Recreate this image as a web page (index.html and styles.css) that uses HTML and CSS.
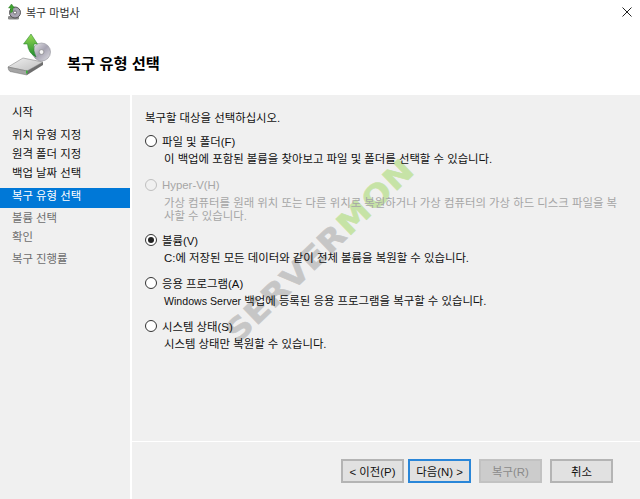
FILE: index.html
```html
<!DOCTYPE html>
<html lang="ko">
<head>
  <meta charset="UTF-8" />
  <title>복구 마법사</title>
  <link rel="stylesheet" href="styles.css">
</head>
<body>
  <div class="wizard">
    <div class="titlebar">
      <svg class="title-icon" width="18" height="18" viewBox="0 0 18 18">
        <rect x="1" y="13" width="11" height="3.5" rx="1.2" fill="#8a8a8a" />
        <circle cx="8" cy="9.5" r="5.5" fill="#a8a4b2" stroke="#4a4a4a" stroke-width=".9" />
        <circle cx="8" cy="9.5" r="1.5" fill="#fff" stroke="#333" stroke-width=".6" />
        <path d="M3.5 10 V5 H1.5 L4.5 1 7.5 5 H5.8 V8.5 Z" fill="#3fa32f" stroke="#1f6d1b" stroke-width=".4" />
      </svg>
      <span class="title-text">복구 마법사</span>
      <svg class="close-icon" width="10" height="10" viewBox="0 0 10 10">
        <path d="M.5 .5 L9.5 9.5 M9.5 .5 L.5 9.5" stroke="#222" stroke-width="1" fill="none" />
      </svg>
    </div>

    <div class="header">
      <svg class="header-icon" width="44" height="44" viewBox="7 33 44 44">
        <defs>
          <linearGradient id="disc" x1="0" y1="0" x2="1" y2="1">
            <stop offset="0" stop-color="#ecebee" />
            <stop offset=".5" stop-color="#a6a3b2" />
            <stop offset="1" stop-color="#e2e2e6" />
          </linearGradient>
          <linearGradient id="top" x1="0" y1="0" x2="1" y2="1">
            <stop offset="0" stop-color="#f0f0f0" />
            <stop offset="1" stop-color="#bdbdbd" />
          </linearGradient>
          <linearGradient id="arrow" x1="0" y1="0" x2="0" y2="1">
            <stop offset="0" stop-color="#98dc55" />
            <stop offset="1" stop-color="#1d8a2e" />
          </linearGradient>
        </defs>
        <!-- drive -->
        <path d="M8 67 L23 58 L43 62 L27 71 Z" fill="url(#top)" stroke="#8a8a8a" stroke-width=".6" />
        <path d="M8 67 L27 71 V75 L10 71.5 Q8 70 8 67 Z" fill="#a4a4a4" stroke="#6f6f6f" stroke-width=".5" />
        <path d="M27 71 L43 62 V65 L27 75 Z" fill="#6e6e6e" />
        <rect x="26" y="70.5" width="1.6" height="3" fill="#3bb53a" />
        <!-- disc -->
        <circle cx="41.5" cy="52" r="9" fill="url(#disc)" stroke="#8f8f97" stroke-width=".6" />
        <circle cx="41.5" cy="52" r="2.4" fill="#f6f6f6" stroke="#777" stroke-width=".6" />
        <!-- arrow -->
        <path d="M31 34 L37.5 44 H34 Q33 51 36 57 Q28 53 27.5 44 H23.5 Z" fill="url(#arrow)" stroke="#1c7a26" stroke-width=".5" />
      </svg>
      <h1 class="header-title">복구 유형 선택</h1>
    </div>

    <div class="body">
      <ul class="steps">
        <li class="step step-start">시작</li>
        <li class="step">위치 유형 지정</li>
        <li class="step">원격 폴더 지정</li>
        <li class="step">백업 날짜 선택</li>
        <li class="step step-current">복구 유형 선택</li>
        <li class="step step-todo">볼륨 선택</li>
        <li class="step step-todo">확인</li>
        <li class="step step-todo step-last">복구 진행률</li>
      </ul>

      <div class="main">
        <div class="content">
          <p class="prompt">복구할 대상을 선택하십시오.</p>

          <div class="option">
            <div class="radio-row"><span class="radio"></span>파일 및 폴더(F)</div>
            <p class="desc">이 백업에 포함된 볼륨을 찾아보고 파일 및 폴더를 선택할 수 있습니다.</p>
          </div>
          <div class="option option-disabled">
            <div class="radio-row"><span class="radio"></span>Hyper-V(H)</div>
            <p class="desc">가상 컴퓨터를 원래 위치 또는 다른 위치로 복원하거나 가상 컴퓨터의 가상 하드 디스크 파일을 복사할 수 있습니다.</p>
          </div>
          <div class="option">
            <div class="radio-row"><span class="radio radio-on"></span>볼륨(V)</div>
            <p class="desc">C:에 저장된 모든 데이터와 같이 전체 볼륨을 복원할 수 있습니다.</p>
          </div>
          <div class="option">
            <div class="radio-row"><span class="radio"></span>응용 프로그램(A)</div>
            <p class="desc"><span class="latin">Windows Server</span> 백업에 등록된 응용 프로그램을 복구할 수 있습니다.</p>
          </div>
          <div class="option">
            <div class="radio-row"><span class="radio"></span>시스템 상태(S)</div>
            <p class="desc">시스템 상태만 복원할 수 있습니다.</p>
          </div>
        </div>

        <div class="footer">
          <button class="btn btn-back">&lt; 이전(P)</button>
          <button class="btn btn-default">다음(N) &gt;</button>
          <button class="btn btn-disabled">복구(R)</button>
          <button class="btn">취소</button>
        </div>
      </div>
    </div>

    <div class="watermark"><span class="wm-gray">SERVER</span><span class="wm-green">MON</span></div>
  </div>
</body>
</html>
```

FILE: styles.css
```css
* {
  box-sizing: border-box;
}
html, body {
  margin: 0;
  height: 100%;
}
body {
  font-family: "Liberation Sans", "Noto Sans CJK KR", sans-serif;
  font-size: 11.4px;
  color: #111;
  background: #fff;
  overflow: hidden;
}
.wizard {
  position: relative;
  width: 640px;
  height: 499px;
  display: flex;
  flex-direction: column;
  overflow: hidden;
}
.titlebar {
  height: 24px;
  display: flex;
  align-items: center;
  padding: 0 8px 0 7px;
  flex: none;
}
.title-icon {
  flex: none;
}
.title-text {
  margin-left: 1px;
  font-size: 11px;
  color: #333;
}
.close-icon {
  margin-left: auto;
}
.header {
  height: 71px;
  flex: none;
  display: flex;
  align-items: center;
  padding: 0 0 9px 7px;
}
.header-icon {
  flex: none;
}
.header-title {
  margin: 13px 0 0 16px;
  font-size: 15.3px;
  font-weight: 700;
  color: #000;
}
.body {
  flex: 1;
  display: flex;
  background: #f0f0f0;
}
.steps {
  list-style: none;
  margin: 0;
  padding: 8px 0 0;
  width: 130px;
  flex: none;
}
.step {
  height: 19px;
  line-height: 19px;
  padding-left: 12px;
  white-space: nowrap;
}
.step-start {
  margin-bottom: 4px;
}
.step-current {
  height: 20px;
  line-height: 16px;
  background: #0078d7;
  color: #fff;
  margin-top: 5px;
  margin-bottom: 1px;
}
.step-todo {
  color: #6d6d6d;
}
.step-last {
  margin-top: 3px;
}
.main {
  flex: 1;
  margin-left: 2px;
  box-shadow: -2px 0 0 #fff;
  display: flex;
  flex-direction: column;
}
.content {
  flex: 1;
  padding: 14px 20px 0 13px;
  position: relative;
  z-index: 1;
}
.prompt {
  margin: 0 0 5px;
  line-height: 18px;
}
.option {
  margin-bottom: 9px;
}
.radio-row {
  display: flex;
  align-items: center;
  height: 18px;
}
.radio {
  width: 12px;
  height: 12px;
  border: 1px solid #333;
  border-radius: 50%;
  background: #fff;
  margin-right: 5px;
  flex: none;
  position: relative;
}
.radio-on::after {
  content: "";
  position: absolute;
  left: 2px;
  top: 2px;
  width: 6px;
  height: 6px;
  border-radius: 50%;
  background: #222;
}
.desc {
  margin: 0 0 0 19px;
  line-height: 13px;
  padding-top: 3px;
}
.latin {
  font-size: 10.6px;
}
.option-disabled {
  color: #a6a6a6;
  margin-top: 10px;
  margin-bottom: 8px;
}
.option-disabled .radio {
  border-color: #bfbfbf;
  background: #f0f0f0;
}
.footer {
  height: 58px;
  flex: none;
  border-top: 1px solid #fff;
  display: flex;
  align-items: flex-start;
  padding: 17px 0 0 209px;
  position: relative;
  z-index: 1;
}
.btn {
  width: 63px;
  height: 24px;
  margin-right: 8px;
  padding: 0;
  font: inherit;
  color: #111;
  background: #e1e1e1;
  border: 2px solid #b4b4b4;
}
.btn-back {
  margin-right: 4px;
}
.btn-default {
  border-color: #2a86d8;
}
.btn-disabled {
  background: #cccccc;
  border-color: #c2c2c2;
  color: #8a8a8a;
}
.watermark {
  position: absolute;
  left: 238px;
  top: 319px;
  z-index: 0;
  transform: rotate(-44deg) scaleX(1.14);
  transform-origin: 0 25px;
  font-family: "DejaVu Sans", sans-serif;
  font-size: 30px;
  font-weight: 700;
  line-height: 30px;
  letter-spacing: 0.5px;
  -webkit-text-stroke: 0.6px;
  white-space: nowrap;
}
.wm-gray {
  color: #c6c6c6;
}
.wm-green {
  color: #c6e3a6;
}
```
